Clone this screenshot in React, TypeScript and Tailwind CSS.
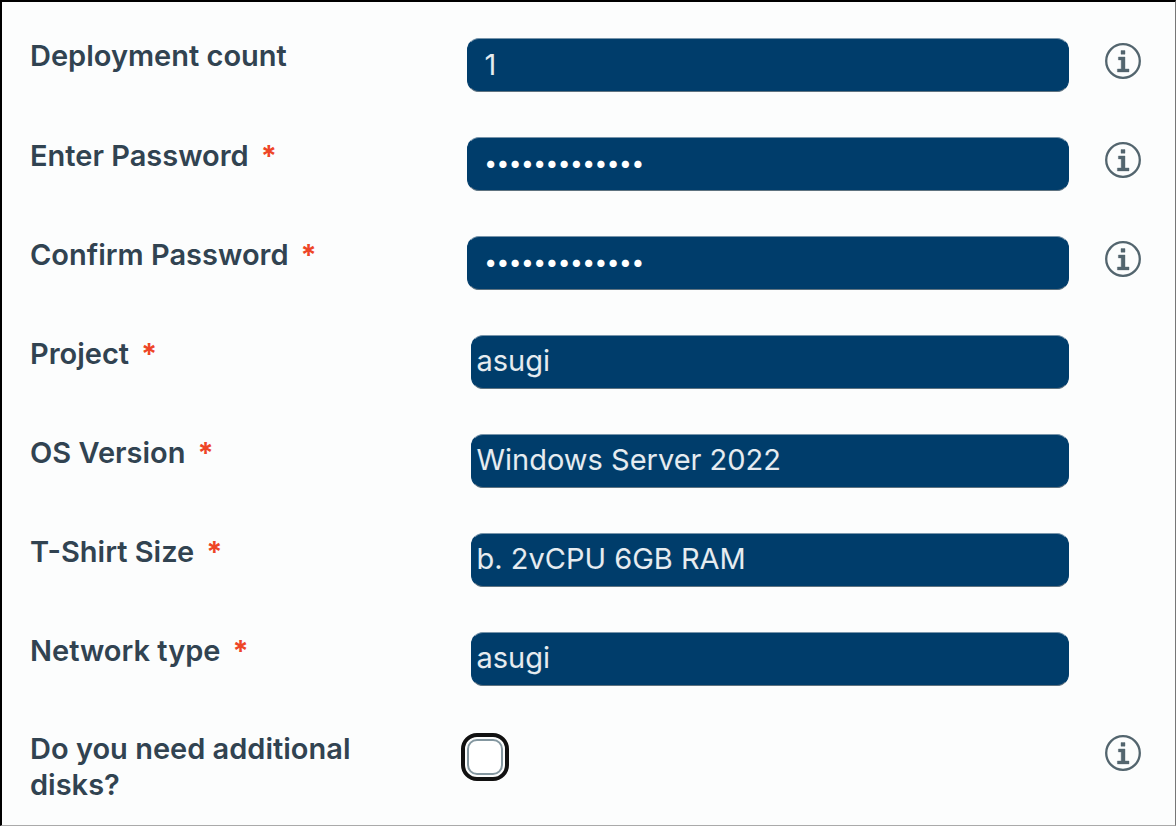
import { useState } from "react";

const controlBase =
  "block h-[54px] w-full appearance-none rounded-xl border border-t-[#7895ab] border-r-[#003d6b] border-b-[#5f7380] border-l-[#003d6b] bg-[#003d6b] pb-0.5 outline-none";

function InfoButton({ topic }: { topic: string }) {
  return (
    <button type="button" aria-label={`About ${topic}`} className="size-9 text-[#53656e]">
      <svg viewBox="0 0 36 36" className="size-9" fill="none" aria-hidden="true">
        <circle cx="18" cy="18" r="16.8" stroke="currentColor" strokeWidth="2.3" />
        <path
          d="M16 7.6H20V11.2H16ZM13.4 14H20V26H24V28.9H12.4V26H16.2V16.9H13.4Z"
          fill="currentColor"
          stroke="currentColor"
          strokeWidth="0.4"
          strokeLinejoin="round"
        />
      </svg>
    </button>
  );
}

type Field = {
  id: string;
  label: string;
  kind: "text" | "password" | "select";
  value: string;
  required?: boolean;
  info?: boolean;
};

const fields: Field[] = [
  { id: "count", label: "Deployment count", kind: "text", value: "1", info: true },
  { id: "password", label: "Enter Password", kind: "password", value: "Passw0rd12345", required: true, info: true },
  { id: "confirm", label: "Confirm Password", kind: "password", value: "Passw0rd12345", required: true, info: true },
  { id: "project", label: "Project", kind: "select", value: "asugi", required: true },
  { id: "os", label: "OS Version", kind: "select", value: "Windows Server 2022", required: true },
  { id: "size", label: "T-Shirt Size", kind: "select", value: "b. 2vCPU 6GB RAM", required: true },
  { id: "network", label: "Network type", kind: "select", value: "asugi", required: true },
];

function FieldRow({ field }: { field: Field }) {
  const [value, setValue] = useState(field.value);
  return (
    <div className="grid grid-cols-[8fr_11fr_72px] items-start">
      <label
        htmlFor={field.id}
        className={`flex gap-3 leading-9 font-semibold ${field.required ? "pt-px" : ""}`}
      >
        {field.label}
        {field.required && <span className="font-bold text-[#ee4527]">*</span>}
      </label>
      {field.kind === "select" ? (
        <div className="pl-1">
          <select
            id={field.id}
            value={value}
            onChange={(e) => setValue(e.target.value)}
            className={`${controlBase} px-1 text-white/90`}
          >
            <option>{field.value}</option>
          </select>
        </div>
      ) : (
        <input
          id={field.id}
          type={field.kind}
          value={value}
          onChange={(e) => setValue(e.target.value)}
          className={`${controlBase} px-4 ${
            field.kind === "password" ? "text-[23px] font-medium text-white" : "text-white/90"
          }`}
        />
      )}
      <div className="flex justify-end pt-[5px]">{field.info && <InfoButton topic={field.label} />}</div>
    </div>
  );
}

export default function App() {
  return (
    <main className="min-h-screen border-t-2 border-r border-b border-l-2 border-t-black border-r-[#777] border-b-[#aaa] border-l-black bg-[#fcfdfd] pt-9 pr-[34px] pb-5 pl-7 font-['Inter',sans-serif] text-[29px] text-[#314351]">
      <form className="flex flex-col gap-[45px]">
        {fields.map((field) => (
          <FieldRow key={field.id} field={field} />
        ))}
        <div className="grid grid-cols-[8fr_11fr_72px] items-start">
          <label htmlFor="disks" className="max-w-[360px] leading-9 font-semibold">
            Do you need additional disks?
          </label>
          <div className="flex">
            <input
              id="disks"
              type="checkbox"
              className="my-2 size-9 appearance-none rounded-[10px] border-2 border-[#8497a0] bg-white outline-4 outline-offset-2 outline-[#111] checked:bg-[#003d6b]"
            />
          </div>
          <div className="flex justify-end pt-1">
            <InfoButton topic="additional disks" />
          </div>
        </div>
      </form>
    </main>
  );
}
